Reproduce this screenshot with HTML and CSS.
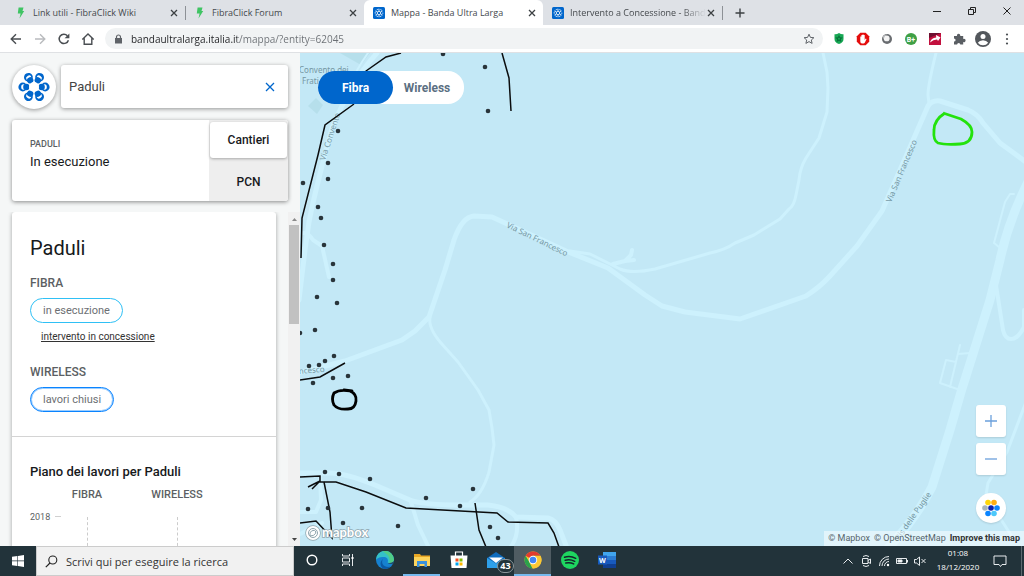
FILE: index.html
```html
<!DOCTYPE html>
<html lang="it">
<head>
  <meta charset="UTF-8" />
  <meta name="viewport" content="width=device-width, initial-scale=1.0"/>
  <title>Mappa - Banda Ultra Larga</title>
  <link rel="stylesheet" href="styles.css">
</head>
<body>

<svg class="defs" aria-hidden="true">
  <symbol id="i-close" viewBox="0 0 10 10"><path d="M2 2l6 6M8 2l-6 6" fill="none" stroke="currentColor" stroke-width="1.3"/></symbol>
  <symbol id="i-bolt" viewBox="0 0 12 12"><path d="M3.600 .5h4.900L7.500 4H9.200L4.500 11.500 5.600 6.500H2.800z" fill="#3fc463"/></symbol>
  <symbol id="i-bul" viewBox="0 0 12 12">
    <rect width="12" height="12" rx="1.500" fill="#06c"/>
    <g fill="none" stroke="#fff" stroke-width=".8">
      <circle cx="6" cy="6" r="1.700"/>
      <path d="M6 1.800v2.400M6 7.800v2.400M2.400 3.900l2 1.200M7.600 6.900l2 1.200M2.400 8.100l2-1.200M7.600 5.100l2-1.200"/>
      <circle cx="6" cy="6" r="3.800" stroke-dasharray="1.900 2.080" stroke-dashoffset="1"/>
    </g>
  </symbol>
</svg>

<!-- Browser tabs -->
<header class="tabs">
  <div class="tab">
    <svg class="favicon"><use href="#i-bolt"/></svg>
    <span class="tab-title">Link utili - FibraClick Wiki</span>
    <button class="tab-close" aria-label="Chiudi"><svg><use href="#i-close"/></svg></button>
  </div>
  <div class="tab divided">
    <svg class="favicon"><use href="#i-bolt"/></svg>
    <span class="tab-title">FibraClick Forum</span>
    <button class="tab-close" aria-label="Chiudi"><svg><use href="#i-close"/></svg></button>
  </div>
  <div class="tab active">
    <svg class="favicon"><use href="#i-bul"/></svg>
    <span class="tab-title">Mappa - Banda Ultra Larga</span>
    <button class="tab-close" aria-label="Chiudi"><svg><use href="#i-close"/></svg></button>
  </div>
  <div class="tab">
    <svg class="favicon"><use href="#i-bul"/></svg>
    <span class="tab-title fade">Intervento a Concessione - Band</span>
    <button class="tab-close" aria-label="Chiudi"><svg><use href="#i-close"/></svg></button>
  </div>
  <button class="new-tab" aria-label="Nuova scheda"><svg width="10" height="10" viewBox="0 0 10 10"><path d="M5 .5v9M.5 5h9" stroke="#3c4043" stroke-width="1.400"/></svg></button>
  <div class="window-buttons">
    <button aria-label="Riduci"><svg width="10" height="10" viewBox="0 0 10 10"><path d="M1 5.500h8" stroke="#222"/></svg></button>
    <button aria-label="Ripristina"><svg width="10" height="10" viewBox="0 0 10 10"><path d="M1.500 3.500h5v5h-5zM3.500 3V1.500h5v5H7" fill="none" stroke="#222"/></svg></button>
    <button aria-label="Chiudi finestra"><svg width="10" height="10" viewBox="0 0 10 10"><path d="M1.500 1.500l7 7M8.500 1.500l-7 7" stroke="#222"/></svg></button>
  </div>
</header>

<!-- Address bar -->
<div class="toolbar">
  <button aria-label="Indietro"><svg viewBox="0 0 14 14"><path d="M12 7H2.500M7 2.200L2.200 7 7 11.800" fill="none" stroke="#4a4e52" stroke-width="1.400"/></svg></button>
  <button aria-label="Avanti"><svg viewBox="0 0 14 14"><path d="M2 7h9.500M7 2.200L11.800 7 7 11.800" fill="none" stroke="#b9bbbe" stroke-width="1.400"/></svg></button>
  <button aria-label="Ricarica"><svg viewBox="0 0 14 14"><path d="M11.400 8.200A4.700 4.700 0 1 1 10.400 3.700" fill="none" stroke="#4a4e52" stroke-width="1.500"/><path d="M12.400 1.400v4.800H7.600z" fill="#4a4e52"/></svg></button>
  <button aria-label="Pagina iniziale"><svg viewBox="0 0 14 14"><path d="M1.300 7.400L7 2l5.700 5.400M3.200 6.300v6h7.600v-6" fill="none" stroke="#4a4e52" stroke-width="1.400"/></svg></button>
  <div class="omnibox">
    <svg width="9" height="10" viewBox="0 0 9 10"><path d="M1 4h7v5.500H1z" fill="#5f6368"/><path d="M2.500 4.500V3a2 2 0 0 1 4 0v1.500" fill="none" stroke="#5f6368" stroke-width="1.200"/></svg>
    <input class="url" type="text" aria-label="Indirizzo" value="bandaultralarga.italia.it/mappa/?entity=62045">
    <button aria-label="Aggiungi ai preferiti"><svg width="12" height="12" viewBox="0 0 12 12"><path d="M6 1.200l1.400 3.200 3.500.3-2.600 2.300.8 3.400L6 8.600l-3.100 1.800.8-3.400L1.100 4.700l3.500-.3z" fill="none" stroke="#5f6368"/></svg></button>
  </div>
  <button aria-label="Protezione"><svg viewBox="0 0 14 14"><path d="M2.500 2.300Q5 2.500 7 1q2 1.500 4.500 1.300V7Q11.500 10.500 7 12 2.500 10.500 2.500 7z" fill="#17a854"/><path d="M7 3l1.200 2.300 2.600.3-1.900 1.700.5 2.600L7 8.700 4.600 9.900l.5-2.600-1.900-1.700 2.600-.3z" fill="#08723a"/><circle cx="7" cy="6.700" r="1" fill="#17a854"/></svg></button>
  <button aria-label="Blocco annunci"><svg viewBox="0 0 14 14"><path d="M4.300.8h5.400l3.500 3.500v5.400l-3.500 3.500H4.300L.8 9.700V4.300z" fill="#e40d0d"/><path d="M4.300 7.500V4.400h1.100V3h1.100v-.6h1.100V3h1.100v5l1-1.400.9.500-1.700 3.500q-.5.900-1.500.9H6q-1.700 0-1.700-2z" fill="#fff"/></svg></button>
  <button aria-label="Estensione"><svg viewBox="0 0 14 14"><circle cx="7" cy="7" r="5" fill="#696c70"/><circle cx="6.700" cy="6.400" r="2.900" fill="#f4f4f4"/><path d="M3 4.500Q4.500 2.500 7 2.300 4.500 4 3.500 7z" fill="#c4c6c8"/></svg></button>
  <button aria-label="B+"><svg viewBox="0 0 14 14"><circle cx="7" cy="7" r="6" fill="#3fa045"/><text x="2.800" y="9.500" class="bplus">B+</text></svg></button>
  <button aria-label="Screenshot"><svg viewBox="0 0 14 14"><path d="M1 1h12v12H1z" fill="#c2103e"/><path d="M1 1h12L1 6z" fill="#6d1030"/><path d="M2 10.500Q3 6 8.200 5.400L8 3l4.500 2.500L10 9l-.9-1.500Q5.500 7.400 2 10.500z" fill="#fff"/></svg></button>
  <button aria-label="Estensioni"><svg viewBox="0 0 14 14"><path d="M2 4h3a1.700 1.700 0 1 1 3.200 0h3v3a1.700 1.700 0 1 1 0 3.100v2.400H8.300a1.600 1.600 0 0 0-3.200 0H2V9.600a1.600 1.600 0 0 0 0-3.200z" fill="#5a5e63"/></svg></button>
  <button class="avatar" aria-label="Profilo"><svg viewBox="0 0 16 16"><circle cx="8" cy="8" r="8" fill="#53575c"/><circle cx="8" cy="5.500" r="2.500" fill="#fff"/><path d="M2.800 11.800q1.700-2.600 5.200-2.600t5.200 2.600Q11.300 14.300 8 14.300t-5.200-2.500z" fill="#fff"/></svg></button>
  <button aria-label="Menu"><svg viewBox="0 0 14 14" fill="#4a4e52"><circle cx="7" cy="2.500" r="1.100"/><circle cx="7" cy="7" r="1.100"/><circle cx="7" cy="11.500" r="1.100"/></svg></button>
</div>

<main>
  <aside class="sidebar">
    <div class="search-row">
      <a class="logo" href="#" aria-label="Banda Ultra Larga">
        <svg viewBox="-16 -16 32 32">
          <defs>
            <g id="arm">
              <circle cy="-11.200" r="4.400" fill="#06c"/>
              <ellipse cy="-10.600" rx="2.700" ry="2.200" fill="#fff"/>
              <circle cy="-7.600" r="3.200" fill="#06c"/>
            </g>
          </defs>
          <use href="#arm" transform="rotate(30)"/>
          <use href="#arm" transform="rotate(90)"/>
          <use href="#arm" transform="rotate(150)"/>
          <use href="#arm" transform="rotate(210)"/>
          <use href="#arm" transform="rotate(270)"/>
          <use href="#arm" transform="rotate(330)"/>
          <circle r="5" fill="#fff"/>
          <path d="M0-6.500L1.200-4.500H-1.200zM0 6.500L1.200 4.500H-1.200zM5.600-3.200L4.500-1.200 3.300-3.200zM-5.600-3.200L-4.500-1.200-3.300-3.200zM5.600 3.200L4.500 1.200 3.300 3.200zM-5.600 3.200L-4.500 1.200-3.300 3.200z" fill="#fff"/>
        </svg>
      </a>
      <div class="search-box">
        <input type="text" aria-label="Cerca comune" value="Paduli">
        <button aria-label="Cancella"><svg width="10" height="10" viewBox="0 0 10 10"><path d="M1 1l8 8M9 1L1 9" stroke="#06c" stroke-width="1.300"/></svg></button>
      </div>
    </div>

    <div class="status-card">
      <div class="status">
        <small>PADULI</small>
        <p>In esecuzione</p>
      </div>
      <div class="status-tabs">
        <button class="selected">Cantieri</button>
        <button>PCN</button>
      </div>
    </div>

    <div class="scroll-area">
      <div class="details">
        <section>
          <h1>Paduli</h1>
          <h2>FIBRA</h2>
          <span class="badge running">in esecuzione</span>
          <a class="more" href="#">intervento in concessione</a>
          <h2>WIRELESS</h2>
          <span class="badge closed">lavori chiusi</span>
        </section>
        <section class="plan">
          <h3>Piano dei lavori per Paduli</h3>
          <div class="plan-grid">
            <b>FIBRA</b>
            <b>WIRELESS</b>
            <span class="year">2018</span>
            <i></i>
            <i></i>
          </div>
        </section>
      </div>
      <div class="scrollbar">
        <svg width="5" height="3" viewBox="0 0 5 3"><path d="M0 3L2.500 0 5 3z" fill="#8a8a8a"/></svg>
        <div class="thumb"></div>
        <svg width="5" height="3" viewBox="0 0 5 3"><path d="M0 0l2.500 3L5 0z" fill="#444"/></svg>
      </div>
    </div>
  </aside>

  <div class="map">
    <svg class="map-canvas" viewBox="300 53 724 493" preserveAspectRatio="xMinYMin slice">
      <g fill="#b6dfeb">
        <path d="M340 53h30l-9 12z"/>
        <path d="M316 98l7 7-6 9-9-8z"/>
      </g>
      <g class="roads">
        <path d="M377 53Q352 80 332 128 314 195 309 222L305 250 299 300" stroke-width="5"/>
        <path d="M368 53Q356 70 350 85" stroke-width="2"/>
        <path d="M303 233Q308 232 313 240L322 246 329 277" stroke-width="4"/>
        <path d="M298 373L345 361 402 340 415 331 429 317 445 270 454 240Q462 217 474 216L492 217 566 251 608 268 645 295 662 306 685 312 740 319 806 296Q820 287 830 276L857 246 882 211 928 106Q932 100 940 101L968 110Q978 114 983 123L1000 143 1026 162" stroke-width="5"/>
        <path d="M936 53Q928 85 928 95L929 103M823 53L827 72 828 88 827 112 819 138 806 158Q800 168 799 180L796 195Q794 206 789 209L780 219 754 235Q740 241 735 243 725 250 710 253L655 269Q632 274 620 269L590 254 570 251" stroke-width="3"/>
        <path d="M613 264L625 261 631 255 632 250M625 261L634 260" stroke-width="4"/>
        <path d="M430 317Q428 328 441 343L458 362 478 390 489 410 492 428 494 445 489 472Q482 495 470 502" stroke-width="3"/>
        <path d="M1028 182Q1008 222 1000 260L990 300 961 392 950 430 932 487Q915 520 888 548" stroke-width="9"/>
        <path d="M1014 194H1010L1005 202 994 243 999 247M960 345L950 387M958 354L970 353M956 362L946 360 940 383 960 390" stroke-width="2"/>
        <path d="M996 285L1003 330Q1005 339 1011 339 1018 339 1024 327V310" stroke-width="4"/>
        <path d="M1026 402L1007 452 988 483 986 495M1000 518L1011 535" stroke-width="3"/>
        <path d="M300 473H330Q345 473 375 485L410 500Q420 504 450 505H488Q508 507 516 517L548 518Q556 520 560 530L567 548" stroke-width="5"/>
        <path d="M411 502L418 525 429 548M516 517Q520 535 510 548M320 475L321 500 316 512H298M298 535L322 523" stroke-width="4"/>
      </g>
      <g class="labels">
        <text x="299" y="73">Convento dei</text>
        <text x="302" y="84">Frati</text>
        <text transform="translate(325 161) rotate(-72)">Via Convento</text>
        <text transform="translate(506 227) rotate(26)">Via San Francesco</text>
        <text transform="translate(891 203) rotate(-67)">Via San Francesco</text>
        <text transform="translate(299 374) rotate(-5)">ncesco</text>
        <text transform="translate(899 541) rotate(-55)">Bis delle Puglie</text>
      </g>
      <g class="cables">
        <path d="M401 53L386 57 366 71 M354 104L325 125 318 155 302 218 301 258"/>
        <path d="M366 71L350 84M502 53L509 78 511 111M300 380L320 377 345 363"/>
        <path d="M300 477L320 476V481L308 487M319 482L312 489M319 482H336L366 492 406 508 497 513 508 522 548 523 554 533 559 547"/>
        <path d="M324 482L330 512 332 538 316 521 300 523M475 503L479 530 486 547"/>
      </g>
      <g id="points" class="points"></g>
      <path d="M334 393Q340 389 350 391 357 394 356 401 355 409 348 409 338 410 334 405 331 399 334 393M344 390L352 391" fill="none" stroke="#000" stroke-width="2.800" stroke-linecap="round"/>
      <path d="M945 113Q934 120 934 130 933 141 938 143 945 145 960 144 972 143 972 132 972 125 961 119L943 113" fill="none" stroke="#24e20c" stroke-width="2.800" stroke-linejoin="round"/>
      <g class="mapbox">
        <circle cx="313" cy="533" r="7"/>
        <circle cx="313" cy="533" r="4.500" class="ring"/>
        <path d="M310 536q-.5-5 3-5.500t2.500 3Q314 536 310 536z" class="ring"/>
        <text x="322" y="537">mapbox</text>
      </g>
    </svg>

    <div class="layer-switch">
      <button class="selected">Fibra</button>
      <button>Wireless</button>
    </div>

    <div class="map-controls">
      <button aria-label="Ingrandisci"><svg width="12" height="12" viewBox="0 0 12 12"><path d="M6 0v12M0 6h12" stroke="#6ba0dc" stroke-width="1.300"/></svg></button>
      <button aria-label="Riduci"><svg width="12" height="12" viewBox="0 0 12 12"><path d="M0 6h12" stroke="#6ba0dc" stroke-width="1.300"/></svg></button>
      <button class="legend" aria-label="Legenda">
        <svg width="18" height="18" viewBox="0 0 18 18">
          <circle cx="6" cy="3.500" r="2.800" fill="#ffd60a"/><circle cx="12" cy="3.500" r="2.800" fill="#ffae12"/>
          <circle cx="3" cy="9" r="2.800" fill="#a9b5bd"/><circle cx="9" cy="9" r="2.800" fill="#0a22b0"/><circle cx="15" cy="9" r="2.800" fill="#0a84ff"/>
          <circle cx="6" cy="14.500" r="2.800" fill="#0a84ff"/><circle cx="12" cy="14.500" r="2.800" fill="#4cc8fa"/>
        </svg>
      </button>
    </div>

    <div class="attribution">
      <a href="#">© Mapbox</a>
      <a href="#">© OpenStreetMap</a>
      <a href="#"><b>Improve this map</b></a>
    </div>
  </div>
</main>

<!-- Windows taskbar -->
<footer class="taskbar">
  <button class="start" aria-label="Start"><svg width="12" height="12" viewBox="0 0 12 12"><path d="M0 1.700L5.400 1v4.600H0zM6 .9L12 0v5.600H6zM0 6.300h5.400v4.600L0 10.200zM6 6.300h6V12l-6-.9z" fill="#fff"/></svg></button>
  <div class="task-search">
    <svg width="13" height="13" viewBox="0 0 13 13"><circle cx="7.800" cy="5" r="4" fill="none" stroke="#222" stroke-width="1.100"/><path d="M5 8L.8 12.200" stroke="#222" stroke-width="1.200"/></svg>
    <input type="text" aria-label="Ricerca" placeholder="Scrivi qui per eseguire la ricerca">
  </div>
  <button class="task" aria-label="Cortana"><svg width="12" height="12" viewBox="0 0 12 12"><circle cx="6" cy="6" r="4.800" fill="none" stroke="#fff" stroke-width="1.400"/></svg></button>
  <button class="task" aria-label="Visualizzazione attività"><svg width="14" height="14" viewBox="0 0 14 14"><path d="M1.500 1v2h7V1M1.500 13v-2h7v2M1.500 5h7v4h-7zM11.500 1v12" fill="none" stroke="#e4e8ea"/><path d="M10.500 4h2v2h-2z" fill="#fff"/></svg></button>
  <div class="apps">
    <button class="task" aria-label="Edge"><svg width="18" height="18" viewBox="0 0 18 18"><circle cx="9" cy="9" r="9" fill="#1681d0"/><path d="M0 9A9 9 0 0 1 18 8.500c0 3-3 4.500-6.500 3.200 1-1.500.8-5.700-4-5.700C3.500 6 .5 7.500 0 9z" fill="#35c1c8"/><path d="M9 0a9 9 0 0 1 9 8.500c0 2-2 3.500-4.500 3.500 1-6-2-9-7-11.500z" fill="#5ed16a" opacity=".7"/><path d="M7 8c-3 5 2 9.500 8 7.500A9 9 0 0 1 9 18C4 17 3 11 7 8z" fill="#0c59a4"/><path d="M11.500 11.700Q13 13 17 12.500L18 10q-1.500 2.500-6.500 1.700z" fill="#263840"/></svg></button>
    <button class="task open" aria-label="Esplora file"><svg width="16" height="14" viewBox="0 0 16 14"><path d="M0 1h6l1 1.500h9V13H0z" fill="#e9a825"/><path d="M0 4h16v9H0z" fill="#fcd45d"/><path d="M3 8h10v6h-2.500v-3h-5v3H3z" fill="#3a91dc"/></svg></button>
    <button class="task" aria-label="Store"><svg width="18" height="18" viewBox="0 0 18 18"><path d="M5.500 5V1h7v4" fill="none" stroke="#fff" stroke-width="1.200"/><path d="M.5 4.500h17L16.500 17h-15z" fill="#fff"/><path d="M5.500 7.500h3v3h-3z" fill="#f25022"/><path d="M9.500 7.500h3v3h-3z" fill="#7fba00"/><path d="M5.500 11.500h3v3h-3z" fill="#00a4ef"/><path d="M9.500 11.500h3v3h-3z" fill="#ffb900"/></svg></button>
    <button class="task mail" aria-label="Posta"><svg width="18" height="16" viewBox="0 0 18 16"><path d="M0 6l9-6 9 6v10H0z" fill="#0f6cbd"/><path d="M2 5.500h14L9 11z" fill="#fff"/><path d="M0 6l9 5.500L18 6v10H0z" fill="#2ea0ea"/></svg><span>43</span></button>
    <button class="task open current" aria-label="Chrome"><svg width="18" height="18" viewBox="0 0 18 18"><circle cx="9" cy="9" r="8.500" fill="#fcc934"/><path d="M9 9L1.600 4.700A8.500 8.500 0 0 1 16.400 4.700z" fill="#e33b2e"/><path d="M16.400 4.700H9L5.300 11.200 8.500 17.500A8.500 8.500 0 0 1 1.600 4.700L5.300 11 9 9z" fill="#2ba24c"/><path d="M9 4.800h7.400A8.500 8.500 0 0 1 8.700 17.500l4-6.500z" fill="#fcc934"/><circle cx="9" cy="9" r="4.200" fill="#fff"/><circle cx="9" cy="9" r="3.300" fill="#4285f4"/></svg></button>
    <button class="task" aria-label="Spotify"><svg width="18" height="18" viewBox="0 0 18 18"><circle cx="9" cy="9" r="9" fill="#1ed760"/><path d="M3.500 6.200Q9.500 4.500 14.700 7.300M4.200 9.200q5-1.300 9.500 1.100M4.800 12q4.200-1 7.900.9" fill="none" stroke="#14252b" stroke-width="1.500" stroke-linecap="round"/></svg></button>
    <button class="task" aria-label="Word"><svg width="18" height="16" viewBox="0 0 18 16"><path d="M5 0h13v4H5z" fill="#41a5ee"/><path d="M5 4h13v4H5z" fill="#2b7cd3"/><path d="M5 8h13v4H5z" fill="#185abd"/><path d="M5 12h13v4H5z" fill="#103f91"/><path d="M0 3.500h9v9H0z" fill="#185abd"/><text x="1" y="10.700" class="word">W</text></svg></button>
  </div>
  <div class="tray">
    <svg viewBox="0 0 14 14"><path d="M2.500 9.500L7 5l4.500 4.500"/></svg>
    <svg viewBox="0 0 14 14"><path d="M3.500 4.500h5.500v5H3.500zM9 6.500l2.500-1.500v4.500L9 8M4 2.500Q7 .5 10 2.500M4 11.500q3 2 6 0"/></svg>
    <svg viewBox="0 0 14 14"><path d="M2.500 12A9.500 9.500 0 0 1 12 2.500M5 12a7 7 0 0 1 7-7M7.500 12A4.500 4.500 0 0 1 12 7.500"/><circle cx="11" cy="11" r="1.200" fill="#fff" stroke="none"/></svg>
    <svg viewBox="0 0 14 14"><path d="M1.500 4.500h10v5h-10zM12.500 6v2.500"/><path d="M3 6h4v2H3z" fill="#fff"/></svg>
    <svg viewBox="0 0 14 14"><path d="M1.500 5.500h2L6.500 3v8.500l-3-2.500h-2zM8.500 5l4 4M12.500 5l-4 4"/></svg>
    <div class="clock"><span>01:08</span><span>18/12/2020</span></div>
    <button class="notify" aria-label="Notifiche"><svg viewBox="0 0 14 14"><path d="M1 2h12v8.500H9L7.500 12.500 6 10.500H1z"/></svg></button>
  </div>
</footer>

<script>
  // wells and poles along the fibre route
  const points = [
    [443, 54], [485, 67], [488, 111], [338, 131], [328, 163], [328, 179], [303, 183],
    [318, 207], [321, 218], [324, 245], [333, 264], [333, 280], [317, 297], [337, 303],
    [315, 330], [300, 333], [334, 356], [309, 366], [319, 365], [325, 361], [333, 378],
    [348, 376], [313, 383], [325, 472], [339, 474], [370, 479], [426, 498], [473, 489],
    [460, 506], [308, 509], [328, 508], [362, 508], [343, 523], [398, 526], [490, 527], [498, 538]
  ];

  const layer = document.getElementById('points');
  points.forEach(([x, y]) => {
    const dot = document.createElementNS('http://www.w3.org/2000/svg', 'circle');
    dot.setAttribute('cx', x);
    dot.setAttribute('cy', y);
    dot.setAttribute('r', 2.3);
    layer.appendChild(dot);
  });

  document.querySelectorAll('.layer-switch, .status-tabs').forEach(group => {
    group.addEventListener('click', e => {
      if (e.target.tagName !== 'BUTTON') return;
      group.querySelector('.selected').classList.remove('selected');
      e.target.classList.add('selected');
    });
  });
</script>

</body>
</html>
```
FILE: styles.css
```css
* {
  box-sizing: border-box;
}

body {
  margin: 0;
  height: 100vh;
  display: flex;
  flex-direction: column;
  overflow: hidden;
  font-family: Roboto, sans-serif;
  color: #17191c;
}

button {
  display: flex;
  align-items: center;
  justify-content: center;
  padding: 0;
  border: none;
  background: none;
  font-family: inherit;
  cursor: pointer;
}

input {
  min-width: 0;
  padding: 0;
  border: none;
  outline: none;
  background: none;
  font-family: inherit;
}

.defs {
  display: none;
}

/* tabs */
.tabs {
  display: flex;
  flex: 0 0 25px;
  padding-left: 6px;
  background: #dee1e6;
  font-family: "Open Sans", sans-serif;
}

.tab {
  display: flex;
  align-items: center;
  flex: 0 1 179px;
  min-width: 0;
  padding: 0 6px 0 9px;
}

.tab.active {
  background: #fff;
  border-radius: 6px 6px 0 0;
}

.tab.divided {
  background: linear-gradient(#8d9196, #8d9196) left center / 1px 14px no-repeat;
}

.favicon {
  width: 12px;
  height: 12px;
  margin-right: 6px;
  flex: none;
}

.tab-title {
  flex: 1;
  overflow: hidden;
  white-space: nowrap;
  font-size: 9px;
  color: #45494d;
}

.fade {
  mask-image: linear-gradient(to right, #000 82%, transparent);
}

.tab-close svg {
  width: 10px;
  height: 10px;
  color: #3c4043;
}

.new-tab {
  width: 35px;
  background: linear-gradient(#8d9196, #8d9196) left center / 1px 14px no-repeat;
}

.window-buttons {
  display: flex;
  margin-left: auto;
}

.window-buttons button {
  width: 35px;
  height: 22px;
}

/* address bar */
.toolbar {
  display: flex;
  align-items: center;
  flex: 0 0 28px;
  padding: 0 5px 0 4px;
  border-bottom: 1px solid #dfe1e4;
  background: #fff;
}

.toolbar > button {
  width: 24px;
}

.toolbar > button svg {
  width: 14px;
  height: 14px;
}

.toolbar > .avatar svg {
  width: 16px;
  height: 16px;
}

.omnibox {
  display: flex;
  align-items: center;
  flex: 1;
  height: 21px;
  margin: 0 4px 0 5px;
  padding: 0 8px 0 9px;
  gap: 8px;
  border-radius: 11px;
  background: #f1f3f4;
}

.url {
  flex: 1;
  font-family: "Open Sans", sans-serif;
  font-size: 10px;
  color: transparent;
  background: linear-gradient(to right, #202124 106px, #6b6f74 106px);
  background-clip: text;
  -webkit-background-clip: text;
}

.bplus {
  font: bold 7px Roboto, sans-serif;
  fill: #fff;
}

main {
  display: flex;
  flex: 1;
  min-height: 0;
}

/* sidebar */
.sidebar {
  display: flex;
  flex-direction: column;
  flex: 0 0 300px;
  min-height: 0;
  background: #f5f7f7;
}

.search-row {
  display: flex;
  gap: 5px;
  padding: 12px 12px 0;
}

.logo {
  display: flex;
  align-items: center;
  justify-content: center;
  width: 44px;
  height: 44px;
  border-radius: 50%;
  background: #fff;
  box-shadow: 0 1px 4px rgba(0, 0, 0, 0.4);
}

.logo svg {
  width: 32px;
  height: 32px;
}

.search-box {
  display: flex;
  align-items: center;
  flex: 1;
  height: 43px;
  padding: 0 13px 0 8px;
  border-radius: 3px;
  background: #fff;
  box-shadow: 0 1px 4px rgba(0, 0, 0, 0.4);
}

.search-box input {
  flex: 1;
  font-size: 13px;
  color: #444;
}

.status-card {
  display: flex;
  margin: 11px 12px;
  border-radius: 3px;
  overflow: hidden;
  background: #fff;
  box-shadow: 0 1px 4px rgba(0, 0, 0, 0.45);
}

.status {
  flex: 1;
  padding: 15px 18px;
}

.status small {
  display: block;
  font-size: 9px;
  line-height: 18px;
  font-weight: 500;
  color: #5c5f63;
}

.status p {
  margin: 0;
  font-size: 13px;
  line-height: 18px;
}

.status-tabs {
  width: 79px;
  padding: 2px 1px 1px;
  background: #eee;
}

.status-tabs button {
  width: 100%;
  height: 36px;
  margin-bottom: 6px;
  border-radius: 3px;
  font-size: 12px;
  font-weight: 500;
  color: #17191c;
}

.status-tabs button:last-child {
  margin-bottom: 0;
}

.status-tabs .selected {
  background: #fff;
  box-shadow: 0 1px 3px rgba(0, 0, 0, 0.3);
}

.scroll-area {
  display: flex;
  flex: 1;
  min-height: 0;
  overflow: hidden;
  padding-left: 12px;
}

.details {
  flex: 1;
  height: 400px;
  margin-right: 12px;
  border-radius: 3px 3px 0 0;
  background: #fff;
  box-shadow: 0 1px 4px rgba(0, 0, 0, 0.35);
}

.details section {
  padding: 22px 18px 24px;
  border-bottom: 1px solid #d4d4d4;
}

h1 {
  margin: 0 0 12px;
  font-size: 20px;
  line-height: 28px;
  font-weight: normal;
}

h2 {
  margin: 0 0 6px;
  font-size: 12px;
  line-height: 18px;
  font-weight: 500;
  color: #5c5f63;
}

.badge {
  display: table;
  padding: 0 12px;
  border: 1px solid;
  border-radius: 13px;
  font-size: 11px;
  line-height: 23px;
  color: #6c6f73;
}

.running {
  border-color: #2fc0f5;
}

.closed {
  border-color: #0a84ff;
  box-shadow: inset 0 0 0 1px rgba(10, 132, 255, 0.4);
}

.more {
  display: block;
  margin: 6px 0 18px 11px;
  font-size: 10px;
  line-height: 16px;
  color: #333;
}

.details .plan {
  padding-top: 26px;
  border-bottom: none;
}

h3 {
  margin: 0 0 6px;
  font-size: 13px;
  line-height: 18px;
  font-weight: 500;
}

.plan-grid {
  display: grid;
  grid-template-columns: 12px 90px 90px;
  justify-items: center;
  row-gap: 10px;
  font-size: 11px;
  line-height: 16px;
  color: #5c5f63;
}

.plan-grid b:first-child {
  grid-column: 2;
}

.plan-grid b {
  font-weight: 500;
}

.year {
  justify-self: start;
  font-size: 9px;
  line-height: 9px;
  white-space: nowrap;
}

.year::after {
  content: "";
  display: inline-block;
  width: 6px;
  height: 1px;
  margin: 0 0 3px 5px;
  background: #d0d0d0;
}

.plan-grid i {
  height: 60px;
  margin-top: 4px;
  border-left: 1px dashed #ccc;
}

.scrollbar {
  display: flex;
  flex-direction: column;
  align-items: center;
  width: 12px;
  padding: 6px 0 5px;
  background: #f1f1f1;
}

.thumb {
  width: 10px;
  height: 99px;
  margin: 4px 0 auto;
  background: #c1c1c1;
}

/* map */
.map {
  position: relative;
  flex: 1;
  min-width: 0;
  background: #c3e8f6;
  overflow: hidden;
}

.map-canvas {
  display: block;
  width: 100%;
  height: 100%;
}

.roads {
  fill: none;
  stroke: #cdf1fd;
  stroke-linecap: round;
  stroke-linejoin: round;
}

.labels {
  font: 8px "Noto Sans", sans-serif;
  fill: #7597a3;
}

.cables {
  fill: none;
  stroke: #0b0d0e;
  stroke-width: 1.5;
}

.points {
  fill: #29343a;
}

.mapbox circle,
.mapbox text {
  fill: #fff;
  stroke: #8fa5ae;
  stroke-width: 1.5;
  paint-order: stroke;
}

.mapbox text {
  font: bold 13px Lato, sans-serif;
}

.mapbox .ring {
  fill: none;
  stroke: #8fa5ae;
  stroke-width: 1;
}

.layer-switch {
  position: absolute;
  top: 18px;
  left: 18px;
  display: flex;
  border-radius: 16px;
  background: #fff;
}

.layer-switch button {
  width: 71px;
  height: 33px;
  padding-right: 3px;
  border-radius: 17px;
  font-size: 12px;
  font-weight: bold;
  color: #5b6f82;
}

.layer-switch .selected {
  width: 75px;
  padding-right: 0;
  background: #06c;
  color: #fff;
}

.map-controls {
  position: absolute;
  right: 18px;
  bottom: 23px;
  display: flex;
  flex-direction: column;
  gap: 6px;
}

.map-controls button {
  width: 30px;
  height: 32px;
  border-radius: 3px;
  background: #fff;
  box-shadow: 0 1px 2px rgba(0, 0, 0, 0.12);
}

.map-controls .legend {
  height: 30px;
  margin-top: 12px;
  border-radius: 50%;
}

.attribution {
  position: absolute;
  right: 0;
  bottom: 0;
  display: flex;
  gap: 4px;
  padding: 0 4px;
  background: rgba(255, 255, 255, 0.5);
  font-size: 9px;
  line-height: 15px;
}

.attribution a {
  color: #56656c;
  text-decoration: none;
}

.attribution b {
  color: #333;
}

/* taskbar */
.taskbar {
  display: flex;
  flex: 0 0 30px;
  background: #22333a;
  color: #fff;
  font-family: "Open Sans", sans-serif;
}

.start {
  width: 36px;
}

.task-search {
  display: flex;
  align-items: center;
  width: 258px;
  padding: 0 8px;
  gap: 8px;
  border: 1px solid #ccc;
  background: #f1f1f1;
}

.task-search input {
  flex: 1;
  font-size: 11px;
}

.task-search input::placeholder {
  color: #333;
}

.task {
  width: 36px;
  height: 30px;
  border-bottom: 2px solid transparent;
}

.apps {
  display: flex;
}

.apps .task {
  position: relative;
  width: 37px;
}

.open {
  border-bottom-color: #76b9ed;
}

.current {
  background: #4f5c62;
}

.mail span {
  position: absolute;
  right: 0;
  bottom: 1px;
  width: 17px;
  border: 1px solid #8b979c;
  border-radius: 8px;
  background: #22333a;
  font-size: 9px;
  line-height: 12px;
  font-weight: bold;
  color: #fff;
}

.word {
  font: bold 7px "Open Sans", sans-serif;
  fill: #fff;
}

.tray {
  display: flex;
  align-items: center;
  gap: 4px;
  margin-left: auto;
  margin-right: 2px;
  padding-right: 14px;
  border-right: 1px solid #5d6a70;
}

.tray svg {
  width: 14px;
  height: 14px;
  fill: none;
  stroke: #e8ecee;
}

.clock {
  display: flex;
  flex-direction: column;
  align-items: center;
  width: 54px;
  padding-bottom: 2px;
  font-size: 8px;
  line-height: 14px;
}

.notify {
  margin-left: 4px;
}
```
